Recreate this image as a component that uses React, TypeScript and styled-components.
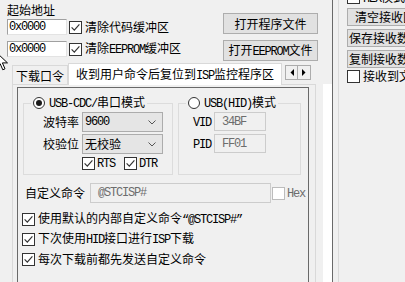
import React from "react";
import styled, { createGlobalStyle } from "styled-components";

const GlobalStyle = createGlobalStyle`
  html, body { margin: 0; padding: 0; }
  body {
    background: #f0f0f0;
    font-family: "Noto Sans CJK SC", "Liberation Sans", sans-serif;
    font-size: 12px;
    color: #000;
    overflow: hidden;
  }
  * { box-sizing: border-box; }
`;

const Window = styled.div`
  position: relative;
  display: flex;
  width: 405px;
  height: 282px;
  overflow: hidden;
  background: #f0f0f0;
  line-height: 14px;
`;

const Ascii = styled.span`
  font-family: "Liberation Mono", "DejaVu Sans Mono", monospace;
  font-size: 12px;
  letter-spacing: -1.2px;
`;

const LeftArea = styled.div`
  flex: none;
  width: 318px;
  display: flex;
  flex-direction: column;
`;

const TopSection = styled.div`
  flex: none;
  display: flex;
  height: 63px;
`;

const AddressBlock = styled.div`
  flex: none;
  width: 223px;
  padding: 3px 0 0 7px;
  display: flex;
  flex-direction: column;
`;

const Caption = styled.div`
  height: 14px;
  white-space: nowrap;
`;

const AddrRow = styled.div<{ $top: number }>`
  display: flex;
  align-items: center;
  height: 16px;
  margin-top: ${(p) => p.$top}px;
`;

const Edit = styled.div<{ $w: number; $h?: number; $disabled?: boolean }>`
  flex: none;
  width: ${(p) => p.$w}px;
  height: ${(p) => p.$h ?? 16}px;
  display: flex;
  align-items: center;
  padding-left: 1px;
  background: ${(p) => (p.$disabled ? "#f0f0f0" : "#ffffff")};
  border: 1px solid;
  border-color: ${(p) =>
    p.$disabled ? "#cccccc" : "#a0a0a0 #e3e3e3 #e3e3e3 #a0a0a0"};
  color: ${(p) => (p.$disabled ? "#6d6d6d" : "#000")};
  white-space: nowrap;
  overflow: hidden;
`;

const CheckBox = styled.span<{ $disabled?: boolean }>`
  flex: none;
  width: 13px;
  height: 13px;
  display: inline-flex;
  align-items: center;
  justify-content: center;
  background: #fff;
  border: 1px solid ${(p) => (p.$disabled ? "#bcbcbc" : "#333333")};
`;

const CheckItem = styled.div<{ $gap?: number; $ml?: number; $h?: number }>`
  flex: none;
  display: flex;
  align-items: center;
  height: ${(p) => p.$h ?? 14}px;
  gap: ${(p) => p.$gap ?? 3}px;
  margin-left: ${(p) => p.$ml ?? 0}px;
  white-space: nowrap;
`;

const DimText = styled.span`
  color: #6d6d6d;
`;

const Check = ({ checked, disabled }: { checked?: boolean; disabled?: boolean }) => (
  <CheckBox $disabled={disabled}>
    {checked && (
      <svg width="11" height="11" viewBox="0 0 11 11">
        <path d="M1.6 5.4 L4.3 8.1 L9.4 2.4" fill="none" stroke="#333" strokeWidth="1.2" />
      </svg>
    )}
  </CheckBox>
);

const RadioRing = styled.span`
  flex: none;
  width: 12px;
  height: 12px;
  border-radius: 50%;
  border: 1px solid #333;
  background: #fff;
  display: inline-flex;
  align-items: center;
  justify-content: center;
`;

const RadioDot = styled.span`
  width: 6px;
  height: 6px;
  border-radius: 50%;
  background: #1a1a1a;
`;

const ButtonColumn = styled.div`
  flex: none;
  width: 95px;
  padding-top: 13px;
  display: flex;
  flex-direction: column;
  gap: 6px;
`;

const PushButton = styled.div<{ $w?: number; $h?: number }>`
  flex: none;
  width: ${(p) => p.$w ?? 95}px;
  height: ${(p) => p.$h ?? 21}px;
  display: flex;
  align-items: center;
  justify-content: center;
  background: #e1e1e1;
  border: 1px solid #adadad;
  white-space: nowrap;
`;

const TabStrip = styled.div`
  flex: none;
  height: 21px;
  margin-left: 12px;
  display: flex;
  align-items: flex-end;
  position: relative;
  z-index: 1;
`;

const Tab = styled.div<{ $active?: boolean; $w: number }>`
  flex: none;
  width: ${(p) => p.$w}px;
  height: ${(p) => (p.$active ? 22 : 19)}px;
  margin-bottom: ${(p) => (p.$active ? -1 : 0)}px;
  padding-top: ${(p) => (p.$active ? 0 : 2)}px;
  display: flex;
  align-items: center;
  justify-content: center;
  white-space: nowrap;
  background: ${(p) => (p.$active ? "#ffffff" : "#f0f0f0")};
  border: 1px solid #d9d9d9;
  border-bottom: none;
`;

const Spinner = styled.div`
  flex: none;
  align-self: flex-start;
  margin: 2px 0 0 3px;
  display: flex;
  height: 15px;
`;

const SpinButton = styled.div`
  width: 13px;
  height: 15px;
  display: flex;
  align-items: center;
  justify-content: center;
  background: #f0f0f0;
  border: 1px solid #acacac;
  & + & {
    border-left: none;
  }
`;

const TabBody = styled.div`
  flex: 1;
  margin-left: 12px;
  width: 304px;
  border: 1px solid #d9d9d9;
  border-bottom: none;
  padding: 2px 6px 0 4px;
  display: flex;
`;

const InnerPanel = styled.div`
  flex: 1;
  border: 1px solid #696969;
  border-bottom: none;
  display: flex;
  flex-direction: column;
`;

const GroupRow = styled.div`
  display: flex;
  gap: 5px;
  padding: 8px 0 0 5px;
`;

const GroupBox = styled.fieldset<{ $w: number }>`
  flex: none;
  width: ${(p) => p.$w}px;
  height: 79px;
  margin: 0;
  padding: 0;
  min-width: 0;
  border: 1px solid #dcdcdc;
`;

const Legend = styled.legend`
  margin-left: 7px;
  padding: 0 2px;
  height: 14px;
  display: flex;
  align-items: center;
  gap: 4px;
  white-space: nowrap;
`;

const GroupContent = styled.div<{ $pl: number; $gap: number }>`
  display: flex;
  flex-direction: column;
  gap: ${(p) => p.$gap}px;
  padding: 2px 0 0 ${(p) => p.$pl}px;
`;

const FieldRow = styled.div<{ $h: number }>`
  display: flex;
  align-items: center;
  height: ${(p) => p.$h}px;
`;

const FieldLabel = styled.span<{ $w: number }>`
  flex: none;
  width: ${(p) => p.$w}px;
  margin-right: 3px;
  white-space: nowrap;
`;

const Combo = styled.div`
  flex: none;
  width: 81px;
  height: 20px;
  display: flex;
  align-items: center;
  justify-content: space-between;
  padding: 0 6px 0 2px;
  background: #e5e5e5;
  border: 1px solid #acacac;
`;

const LineRow = styled.div`
  display: flex;
  align-items: center;
  height: 13px;
  margin-top: 1px;
  padding-left: 39px;
`;

const CustomRow = styled.div`
  display: flex;
  align-items: center;
  height: 20px;
  margin-top: 8px;
  padding-left: 7px;
`;

const CheckList = styled.div`
  display: flex;
  flex-direction: column;
  margin-top: 6px;
  padding-left: 4px;
`;

const Gutter = styled.div<{ $w: number }>`
  flex: none;
  width: ${(p) => p.$w}px;
`;

const WhiteRail = styled.div`
  flex: none;
  width: 9px;
  background: linear-gradient(to bottom, #f0f0f0 84px, #ffffff 84px);
`;

const Rule = styled.div<{ $color: string }>`
  flex: none;
  width: 1px;
  background: ${(p) => p.$color};
`;

const RightPanel = styled.div`
  flex: none;
  width: 80px;
  display: flex;
  flex-direction: column;
`;

const RightButtons = styled.div`
  display: flex;
  flex-direction: column;
  gap: 3px;
  margin-top: 4px;
`;

const Cursor = styled.svg`
  position: absolute;
  left: -4px;
  top: 52px;
`;

const Chevron = () => (
  <svg width="8" height="5" viewBox="0 0 8 5">
    <path d="M0.5 0.5 L4 4 L7.5 0.5" fill="none" stroke="#555" strokeWidth="1" />
  </svg>
);

const Arrow = ({ dir }: { dir: "l" | "r" }) => (
  <svg width="4" height="7" viewBox="0 0 4 7">
    <path d={dir === "l" ? "M4 0 L0.5 3.5 L4 7 Z" : "M0 0 L3.5 3.5 L0 7 Z"} fill="#000" />
  </svg>
);

export default function App() {
  return (
    <>
      <GlobalStyle />
      <Window>
        <LeftArea>
          <TopSection>
            <AddressBlock>
              <Caption>起始地址</Caption>
              <AddrRow $top={2}>
                <Edit $w={60}>
                  <Ascii>0x0000</Ascii>
                </Edit>
                <CheckItem $ml={2} $gap={3}>
                  <Check checked />
                  <span>清除代码缓冲区</span>
                </CheckItem>
              </AddrRow>
              <AddrRow $top={6}>
                <Edit $w={60}>
                  <Ascii>0x0000</Ascii>
                </Edit>
                <CheckItem $ml={2} $gap={3}>
                  <Check checked />
                  <span>
                    清除<Ascii>EEPROM</Ascii>缓冲区
                  </span>
                </CheckItem>
              </AddrRow>
            </AddressBlock>
            <ButtonColumn>
              <PushButton>打开程序文件</PushButton>
              <PushButton>
                <span>
                  打开<Ascii>EEPROM</Ascii>文件
                </span>
              </PushButton>
            </ButtonColumn>
          </TopSection>

          <TabStrip>
            <Tab $w={56}>下载口令</Tab>
            <Tab $w={214} $active>
              <span>
                收到用户命令后复位到<Ascii>ISP</Ascii>监控程序区
              </span>
            </Tab>
            <Spinner>
              <SpinButton>
                <Arrow dir="l" />
              </SpinButton>
              <SpinButton>
                <Arrow dir="r" />
              </SpinButton>
            </Spinner>
          </TabStrip>

          <TabBody>
            <InnerPanel>
              <GroupRow>
                <GroupBox $w={150}>
                  <Legend>
                    <RadioRing>
                      <RadioDot />
                    </RadioRing>
                    <span>
                      <Ascii>USB-CDC/</Ascii>串口模式
                    </span>
                  </Legend>
                  <GroupContent $pl={19} $gap={2}>
                    <FieldRow $h={20}>
                      <FieldLabel $w={36}>波特率</FieldLabel>
                      <Combo>
                        <Ascii>9600</Ascii>
                        <Chevron />
                      </Combo>
                    </FieldRow>
                    <FieldRow $h={20}>
                      <FieldLabel $w={36}>校验位</FieldLabel>
                      <Combo>
                        <span>无校验</span>
                        <Chevron />
                      </Combo>
                    </FieldRow>
                    <LineRow>
                      <CheckItem $gap={2} $h={13}>
                        <Check checked />
                        <Ascii>RTS</Ascii>
                      </CheckItem>
                      <CheckItem $gap={2} $ml={9} $h={13}>
                        <Check checked />
                        <Ascii>DTR</Ascii>
                      </CheckItem>
                    </LineRow>
                  </GroupContent>
                </GroupBox>
                <GroupBox $w={123}>
                  <Legend>
                    <RadioRing />
                    <span>
                      <Ascii>USB(HID)</Ascii>模式
                    </span>
                  </Legend>
                  <GroupContent $pl={14} $gap={3}>
                    <FieldRow $h={19}>
                      <FieldLabel $w={18}>
                        <Ascii>VID</Ascii>
                      </FieldLabel>
                      <Edit $w={52} $h={19} $disabled>
                        <Ascii>&nbsp;34BF</Ascii>
                      </Edit>
                    </FieldRow>
                    <FieldRow $h={19}>
                      <FieldLabel $w={18}>
                        <Ascii>PID</Ascii>
                      </FieldLabel>
                      <Edit $w={52} $h={19} $disabled>
                        <Ascii>&nbsp;FF01</Ascii>
                      </Edit>
                    </FieldRow>
                  </GroupContent>
                </GroupBox>
              </GroupRow>

              <CustomRow>
                <FieldLabel $w={62}>自定义命令</FieldLabel>
                <Edit $w={181} $h={20} $disabled>
                  <Ascii>&nbsp;@STCISP#</Ascii>
                </Edit>
                <CheckItem $ml={1} $gap={2}>
                  <Check disabled />
                  <DimText>
                    <Ascii>Hex</Ascii>
                  </DimText>
                </CheckItem>
              </CustomRow>

              <CheckList>
                <CheckItem $h={20}>
                  <Check checked />
                  <span>
                    使用默认的内部自定义命令<Ascii>“@STCISP#”</Ascii>
                  </span>
                </CheckItem>
                <CheckItem $h={20}>
                  <Check checked />
                  <span>
                    下次使用<Ascii>HID</Ascii>接口进行<Ascii>ISP</Ascii>下载
                  </span>
                </CheckItem>
                <CheckItem $h={20}>
                  <Check checked />
                  <span>每次下载前都先发送自定义命令</span>
                </CheckItem>
              </CheckList>
            </InnerPanel>
          </TabBody>
        </LeftArea>

        <Gutter $w={5} />
        <WhiteRail />
        <Rule $color="#696969" />
        <Gutter $w={5} />
        <Rule $color="#dadada" />
        <Gutter $w={8} />

        <RightPanel>
          <CheckItem $h={13} style={{ marginTop: -9 }}>
            <Check />
            <span>
              <Ascii>HEX</Ascii>模式
            </span>
          </CheckItem>
          <RightButtons>
            <PushButton $w={76} $h={18}>清空接收区</PushButton>
            <PushButton $w={76} $h={18}>保存接收数据</PushButton>
            <PushButton $w={76} $h={18}>复制接收数据</PushButton>
          </RightButtons>
          <CheckItem $h={14} style={{ marginTop: 1 }}>
            <Check />
            <span>接收到文件</span>
          </CheckItem>
        </RightPanel>

        <Cursor width="13" height="20" viewBox="0 0 13 20">
          <path
            d="M0.5 0.5 L0.5 15.5 L4.2 11.8 L6.8 17.8 L9 16.8 L6.4 10.9 L11.5 10.9 Z"
            fill="#fff"
            stroke="#000"
            strokeWidth="1"
          />
        </Cursor>
      </Window>
    </>
  );
}
